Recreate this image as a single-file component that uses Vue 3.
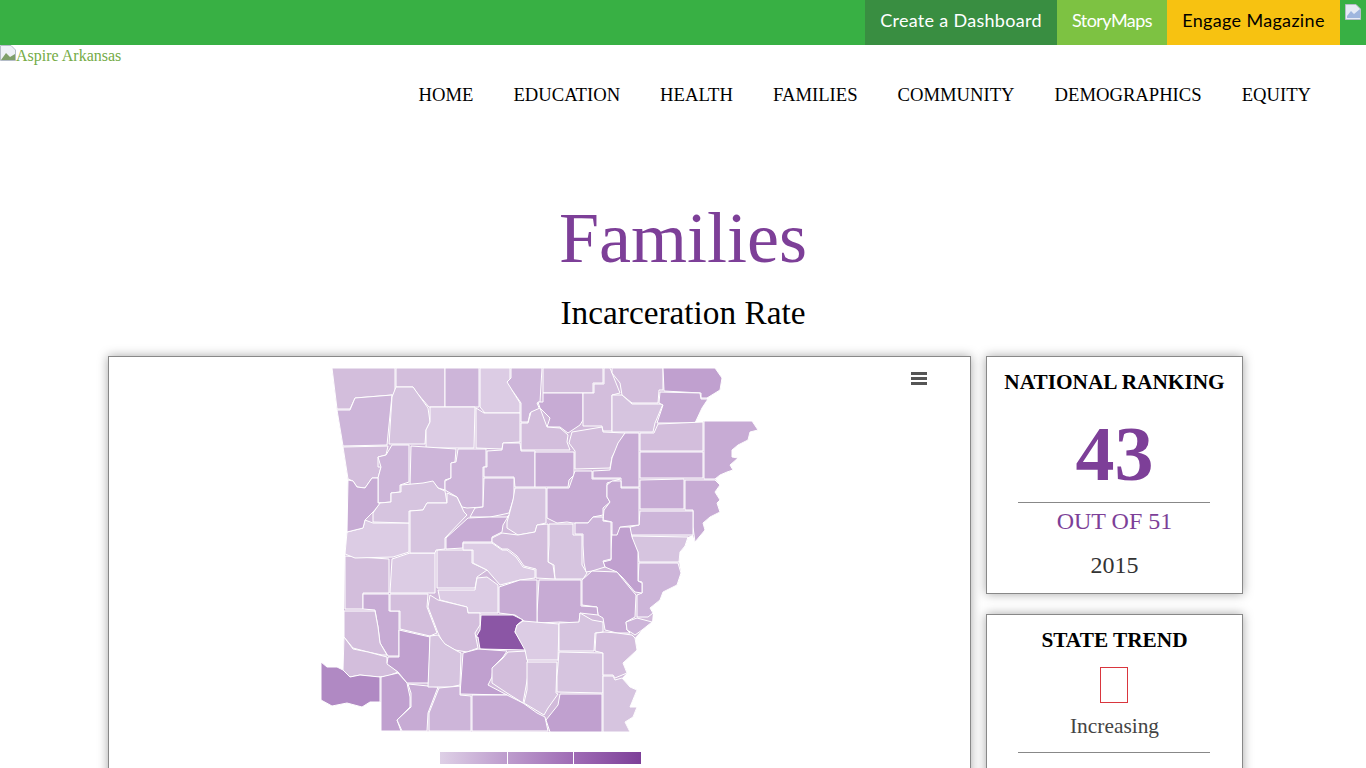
<script setup>
const shades = { a: '#dccce4', b: '#d6c4df', c: '#d3bedc', d: '#cdb5d9', e: '#c7abd4', f: '#c0a0cf', g: '#b089c3', h: '#8b56a5' }
const outline = '332,368 715,368 722,378 720,390 707,398 702,408 695,423 703,422 704,421 752,421 758,430 750,432 748,440 738,445 732,450 732,457 738,458 730,465 733,470 727,472 720,475 715,479 720,485 715,492 720,500 717,503 720,512 710,517 703,523 705,530 695,542 693,535 688,537 685,546 680,552 679,562 681,573 677,585 663,592 660,600 650,608 653,613 652,622 642,630 635,638 637,650 623,663 627,673 622,678 630,687 637,690 630,707 637,707 633,717 625,722 630,732 381,731 381,702 370,702 362,707 347,703 332,706 321,700 321,662 327,667 337,667 343,670 344,637 344,611 345,556 347,532 348,480 343,447 337,410'
const raw = [
['c','332,368 395,368 395,395 392,395 355,398 350,409 337,409'],
['c','396,368 445,368 445,407 429,407 417,393 413,387 396,387'],
['d','445,368 479,368 479,407 445,407'],
['a','480,368 510,368 510,380 512,390 520,403 520,413 485,413 480,407'],
['d','511,368 542,368 540,402 537,403 540,410 530,413 528,422 521,422 521,403 512,390 507,382 511,378'],
['c','543,368 603,368 603,383 593,383 593,393 543,393'],
['e','543,393 583,393 583,420 580,425 568,433 560,427 547,427 550,418 540,408 538,402 543,402'],
['c','583,393 594,393 594,384 604,384 604,368 610,368 620,393 612,395 612,431 603,431 602,426 583,426'],
['c','612,368 663,368 663,390 659,390 658,403 632,403 622,395 620,383 612,373'],
['b','612,395 622,395 632,404 663,404 655,423 653,432 612,432'],
['f','663,368 715,368 722,378 720,390 707,398 701,398 701,393 664,391'],
['e','660,392 700,393 701,399 708,399 702,408 695,423 657,423 663,405 659,403'],
['c','658,424 703,422 703,451 640,451 640,433 654,433'],
['e','704,421 752,421 758,430 750,432 748,440 738,445 732,450 732,457 738,458 730,465 733,470 727,472 720,475 715,479 704,479'],
['e','640,452 703,452 703,478 640,478'],
['e','640,480 684,479 684,509 640,509'],
['e','685,480 715,480 720,485 715,492 720,500 717,503 720,512 710,517 703,523 705,530 695,542 693,527 693,510 685,510'],
['d','640,511 693,511 693,535 630,535 630,527 639,525'],
['b','632,536 688,537 685,546 680,552 679,562 639,562 638,552 636,548 632,540'],
['d','639,563 678,563 681,573 677,585 663,592 660,600 650,608 653,613 648,617 637,617 637,595 642,593 642,582 638,581'],
['f','612,530 618,527 630,527 632,537 638,552 638,581 642,583 642,593 635,592 623,578 617,572 605,567 603,562 611,560 611,550'],
['d','337,410 350,410 355,398 392,395 387,445 343,446'],
['b','396,387 413,387 428,408 430,422 426,430 425,444 389,444 392,397'],
['a','430,407 475,407 474,448 426,448 426,430 430,422'],
['b','476,408 484,413 520,413 520,442 503,443 502,449 476,448'],
['c','521,423 528,423 531,412 540,408 547,427 560,428 568,435 567,442 570,450 521,450'],
['c','343,447 388,446 386,455 378,457 378,467 381,467 378,478 372,478 365,488 357,487 353,481 348,479'],
['d','392,445 409,445 409,482 400,485 400,492 391,493 391,502 378,503 378,478 381,467 378,457 386,455'],
['d','411,446 456,449 455,462 451,463 451,478 445,480 445,490 438,488 433,482 423,484 410,486'],
['d','458,449 486,449 486,467 483,467 483,507 467,508 462,507 457,497 445,490 445,481 451,478 451,463 456,462'],
['d','487,451 502,450 503,443 520,443 521,451 535,451 535,487 515,487 514,477 484,477 484,467 487,467'],
['d','484,478 514,478 514,497 509,513 500,515 490,517 470,517 475,508 483,507'],
['b','515,488 546,488 546,523 537,525 535,532 518,535 507,528 507,522 509,515 513,500'],
['e','535,452 574,452 574,475 569,480 568,487 535,487'],
['e','547,488 569,488 575,471 592,471 592,479 620,479 607,483 607,497 610,502 603,508 603,515 593,517 588,523 573,523 567,522 557,523 547,518'],
['c','575,451 569,443 572,432 602,427 603,432 625,433 612,457 610,468 575,469'],
['e','625,433 639,433 639,487 621,487 621,478 593,478 593,471 610,470 612,458 618,443'],
['e','621,488 639,488 639,525 620,527 617,535 612,535 612,522 603,520 604,510 610,502 607,497 607,485 612,481 621,481'],
['b','549,524 573,524 573,535 582,535 582,565 587,573 583,579 555,579 554,565 548,562 549,545'],
['d','575,523 588,523 593,517 603,517 603,521 611,522 611,559 603,561 605,567 592,571 586,572 584,563 583,545 583,534 575,534'],
['e','582,580 592,571 617,572 630,588 636,595 635,617 626,622 627,630 630,633 617,633 605,630 603,618 598,615 597,607 582,605'],
['e','539,580 581,580 581,606 597,607 598,615 580,613 579,623 560,622 537,623 537,613'],
['c','345,556 389,559 389,593 363,593 363,609 345,609'],
['a','392,559 410,553 435,553 435,593 390,593'],
['b','437,550 472,550 472,563 487,570 477,577 475,588 437,588'],
['a','347,532 363,528 365,520 373,523 409,523 409,552 393,557 355,558 345,554'],
['e','348,480 353,481 357,487 365,488 372,478 378,478 378,503 381,503 373,512 365,520 363,528 347,532'],
['b','380,503 391,502 391,493 401,492 401,485 423,483 433,481 438,488 445,491 447,503 427,503 423,510 409,511 409,523 373,522 373,513'],
['b','410,511 423,510 427,503 447,503 447,493 457,497 464,512 467,515 445,538 445,549 436,550 435,553 410,553'],
['e','446,538 468,518 490,517 507,517 509,515 503,525 502,532 492,537 492,542 463,542 463,548 446,549'],
['a','463,543 492,543 502,550 507,550 516,557 523,567 535,570 535,578 520,580 500,585 487,570 473,563 473,550 463,550'],
['c','492,538 502,533 518,535 535,532 537,525 548,524 548,562 553,565 555,579 536,578 536,569 524,566 517,556 508,549 502,549 492,542'],
['a','438,590 475,590 477,578 487,577 498,585 498,613 468,613 467,607 440,600'],
['e','499,587 520,580 537,580 537,623 527,623 515,615 499,613'],
['h','481,615 513,615 523,620 517,625 515,632 527,650 480,649 478,637 476,637 480,630'],
['e','363,594 389,594 389,611 399,611 399,656 388,656 380,643 378,627 375,610 363,609'],
['c','390,594 428,594 427,607 437,633 430,636 417,633 400,629 400,611 390,611'],
['c','430,595 438,600 467,607 468,613 480,613 480,625 475,633 478,648 467,652 455,650 443,643 438,633 428,607'],
['c','344,611 375,611 378,627 380,643 387,655 382,655 368,652 353,648 344,637'],
['c','344,637 353,649 368,652 387,657 387,663 398,672 388,676 378,677 360,675 350,677 343,670'],
['g','321,662 327,667 337,667 343,670 350,677 360,675 380,677 380,702 370,702 362,707 347,703 332,706 321,700'],
['f','388,657 399,657 399,630 430,637 429,683 407,683 398,672 387,664'],
['f','381,677 398,673 407,683 410,697 410,707 397,720 401,731 381,731'],
['e','408,684 438,687 428,713 427,731 402,731 397,720 411,707 411,693'],
['b','430,636 438,635 445,644 457,651 461,653 460,685 450,687 428,687'],
['f','463,653 478,649 507,651 503,657 493,667 492,677 488,685 507,695 460,694'],
['d','439,688 460,686 460,695 471,696 471,731 429,731 429,713'],
['e','472,695 507,695 523,703 537,713 545,717 548,731 472,731'],
['c','508,652 527,651 528,675 523,703 507,693 492,683 492,668 503,658'],
['b','527,662 557,662 556,693 558,694 548,708 544,715 524,703 527,690'],
['a','517,625 523,621 559,624 558,660 527,660 525,650 515,632'],
['b','559,623 579,622 580,613 592,620 603,622 603,632 595,633 594,651 559,651'],
['b','559,652 603,653 603,693 557,692 557,677'],
['f','560,694 602,694 602,732 550,732 546,720 558,705'],
['b','603,676 613,676 615,680 622,678 630,687 637,690 630,707 637,707 633,717 625,722 630,732 603,732'],
['c','596,633 605,632 617,633 632,635 635,638 637,650 623,663 627,673 615,678 613,675 603,675 603,653 595,651'],
['d','627,630 626,622 637,618 652,622 642,630 635,635 632,633'],
]
const counties = raw.map(([s, points]) => ({ points, fill: shades[s] }))
const nav = ['HOME', 'EDUCATION', 'HEALTH', 'FAMILIES', 'COMMUNITY', 'DEMOGRAPHICS', 'EQUITY']
</script>

<template>
  <div class="page">
    <div class="topbar">
      <a class="tb dash">Create a Dashboard</a>
      <a class="tb story">StoryMaps</a>
      <a class="tb engage">Engage Magazine</a>
      <span class="flag">
        <svg width="16" height="16" viewBox="0 0 16 16"><path d="M0.5 0.5H11L15.5 5V15.5H0.5Z" fill="#e6ebf5" stroke="#b4bcc8"/><path d="M2 12L6 7L9 10L15 5V14H2Z" fill="#9fb6de"/></svg>
      </span>
    </div>
    <header class="head">
      <a class="logo"><svg width="16" height="16" viewBox="0 0 16 16"><path d="M0.5 0.5H11L15.5 5V15.5H0.5Z" fill="#eef1f7" stroke="#b4bcc8"/><path d="M1 15L6 8L10 12L15 9V15Z" fill="#7f9f6a"/></svg>Aspire Arkansas</a>
      <nav class="nav"><a v-for="n in nav" :key="n">{{ n }}</a></nav>
    </header>
    <h1 class="title">Families</h1>
    <h2 class="sub">Incarceration Rate</h2>
    <div class="main">
      <section class="card map">
        <svg class="menu" width="16" height="14" viewBox="0 0 16 14"><path d="M0 1.5H16M0 6.5H16M0 11.5H16" stroke="#555" stroke-width="3"/></svg>
        <svg class="state" width="460" height="410" viewBox="310 360 460 410">
          <defs>
            <linearGradient id="l1"><stop offset="0" stop-color="#ded0e6"/><stop offset="1" stop-color="#bd9ccd"/></linearGradient>
            <linearGradient id="l2"><stop offset="0" stop-color="#bd9ccd"/><stop offset="1" stop-color="#9f6bb5"/></linearGradient>
            <linearGradient id="l3"><stop offset="0" stop-color="#9f6bb5"/><stop offset="1" stop-color="#7d3f98"/></linearGradient>
          </defs>
          <polygon :points="outline" fill="#d1bada"/>
          <polygon v-for="(c, i) in counties" :key="i" :points="c.points" :fill="c.fill" stroke="#fff" stroke-width="1" stroke-linejoin="round"/>
          <rect x="440" y="752" width="67" height="12" fill="url(#l1)"/>
          <rect x="508" y="752" width="65" height="12" fill="url(#l2)"/>
          <rect x="574" y="752" width="67" height="12" fill="url(#l3)"/>
        </svg>
      </section>
      <aside class="side">
        <section class="card rank">
          <h3>NATIONAL RANKING</h3>
          <div class="num">43</div>
          <hr>
          <div class="out">OUT OF 51</div>
          <div class="year">2015</div>
        </section>
        <section class="card trend">
          <h3>STATE TREND</h3>
          <div class="tofu"></div>
          <div class="inc">Increasing</div>
          <hr>
          <div class="blank"></div>
        </section>
      </aside>
    </div>
  </div>
</template>

<style>
html, body { margin: 0; overflow: hidden; background: #fff; }
</style>

<style scoped>
.page { width: 1366px; height: 768px; overflow: hidden; font-family: "Liberation Serif", "Times New Roman", serif; color: #000; }
.topbar { height: 45px; background: #38b044; display: flex; justify-content: flex-end; }
.tb { display: flex; align-items: center; justify-content: center; font-family: Lato, sans-serif; font-size: 18px; padding-bottom: 5px; box-sizing: border-box; height: 45px; }
.dash { width: 192px; background: #398e41; color: #fff; letter-spacing: .3px; }
.story { width: 110px; background: #7dc242; color: #fff; letter-spacing: -.55px; }
.engage { width: 173px; background: #f7c211; color: #000; letter-spacing: .33px; }
.flag { width: 26px; padding: 4px 0 0 5px; box-sizing: border-box; line-height: 0; }
.head { height: 87px; }
.logo { display: flex; align-items: flex-start; font-size: 16px; line-height: 21px; color: #74ab46; }
.logo svg { flex: none; }
.nav { display: flex; justify-content: flex-end; gap: 40px; padding: 14px 55px 0 0; font-size: 18.65px; line-height: 30px; }
.title { margin: 0; height: 161px; padding-top: 70px; box-sizing: border-box; text-align: center; font-weight: 400; font-size: 72px; line-height: 72px; color: #7d3f98; }
.sub { margin: 0; text-align: center; font-weight: 400; font-size: 33.3px; line-height: 40px; height: 63px; }
.main { display: flex; gap: 15px; padding-left: 108px; align-items: flex-start; }
.card { background: #fff; border: 1px solid #888; box-shadow: 0 0 10px rgba(0,0,0,.35); box-sizing: border-box; }
.map { width: 863px; height: 560px; position: relative; }
.menu { position: absolute; left: 802px; top: 15px; }
.state { display: block; margin: 3px 0 0 201px; }
.side { width: 257px; display: flex; flex-direction: column; gap: 20px; }
.rank { height: 238px; text-align: center; }
.trend { height: 300px; text-align: center; }
h3 { margin: 0; font-size: 21.3px; line-height: 24px; font-weight: 700; padding-top: 13px; }
hr { width: 192px; margin: 0 0 0 31px; border: 0; border-top: 1px solid #888; }
.num { font-size: 78px; line-height: 80px; font-weight: 700; color: #7d3f98; margin: 20px 0 8px; height: 80px; }
.out { font-size: 24px; line-height: 36px; color: #7d3f98; }
.year { font-size: 24px; line-height: 30px; color: #333; padding-top: 11px; }
.tofu { width: 28px; height: 36px; border: 1px solid #d9363e; box-sizing: border-box; margin: 15px 0 0 113px; }
.inc { font-size: 21.4px; line-height: 30px; color: #444; padding-top: 8px; height: 49px; box-sizing: border-box; }
.blank { height: 60px; }
</style>
